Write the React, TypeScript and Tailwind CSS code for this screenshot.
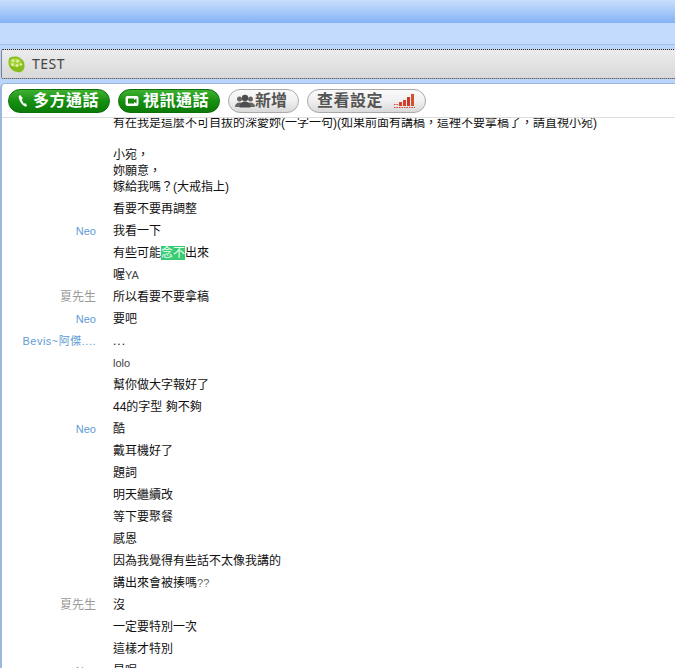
const messages: { name?: string; lines: string[] }[] = [
  {
    lines: [
      "有在我是這麼不可自拔的深愛妳(一字一句)(如果前面有講稿，這裡不要拿稿了，請直視小宛)",
      "\u00a0",
      "小宛，",
      "妳願意，",
      "嫁給我嗎？(大戒指上)",
    ],
  },
  { lines: ["看要不要再調整"] },
  { name: "Neo", lines: ["我看一下"] },
  { lines: ["HIGHLIGHT"] },
  { lines: ["喔YA"] },
  { name: "夏先生", lines: ["所以看要不要拿稿"] },
  { name: "Neo", lines: ["要吧"] },
  { name: "Bevis~阿傑....", lines: ["..."] },
  { lines: ["lolo"] },
  { lines: ["幫你做大字報好了"] },
  { lines: ["44的字型 夠不夠"] },
  { name: "Neo", lines: ["酷"] },
  { lines: ["戴耳機好了"] },
  { lines: ["題詞"] },
  { lines: ["明天繼續改"] },
  { lines: ["等下要聚餐"] },
  { lines: ["感恩"] },
  { lines: ["因為我覺得有些話不太像我講的"] },
  { lines: ["講出來會被揍嗎??"] },
  { name: "夏先生", lines: ["沒"] },
  { lines: ["一定要特別一次"] },
  { lines: ["這樣才特別"] },
  { name: "Neo", lines: ["是喔"] },
];

function LeafLogo() {
  return (
    <svg viewBox="0 0 17 17" className="h-[17px] w-[17px] shrink-0">
      <path
        d="M.6 4.500C.6 1.800 3 .4 5.500.8c2.500-.6 5 .1 7 1.400 2.600 1.700 4.200 4.100 4 7 .2 1.500-.2 3.100-1 4.600-.9 1.800-2.800 2.800-4.800 2.400-3.400-.2-6.100-1.200-8-3.600C.9 10.500.2 7.500.6 4.500z"
        fill="#86bd1c"
      />
      <ellipse cx="7.500" cy="6.500" rx="6" ry="4.500" fill="#a6d23c" />
      <circle cx="5" cy="4.500" r="1.500" fill="#dcefa0" />
      <circle cx="9.500" cy="5" r="1.500" fill="#dcefa0" />
      <circle cx="4.500" cy="8.500" r="1.500" fill="#dcefa0" />
      <circle cx="9" cy="9.500" r="1.500" fill="#dcefa0" />
      <circle cx="13" cy="8.500" r="1.300" fill="#dcefa0" />
    </svg>
  );
}

function PhoneIcon() {
  return (
    <svg viewBox="0 0 14 16" className="h-4 w-[14px] shrink-0">
      <path
        d="M4.200 2 2.800 3C2.400 6 5 11.600 9.400 13.800l1.800-1-1.900-2.700-1.300.6C7.100 9.600 6.100 7.600 5.900 6.200l1-1z"
        fill="#fff"
      />
    </svg>
  );
}

function VideoIcon() {
  return (
    <svg viewBox="0 0 14 12" className="h-3 w-[14px] shrink-0">
      <rect x="0.500" y="1" width="13" height="10" rx="2" fill="#fff" />
      <rect x="3" y="3.500" width="6" height="5" fill="#188a10" />
      <path d="M9 5 11.500 3.500v5L9 7z" fill="#188a10" />
    </svg>
  );
}

function PeopleIcon() {
  return (
    <svg viewBox="0 0 20 14" className="h-[14px] w-5 shrink-0">
      <circle cx="4.500" cy="5" r="2.500" fill="#666" />
      <circle cx="15.500" cy="5" r="2.500" fill="#666" />
      <path d="M0 13c0-3 2-4.500 4.500-4.500S9 10 9 13zM11 13c0-3 2-4.500 4.500-4.500S20 10 20 13z" fill="#666" />
      <circle cx="10" cy="4" r="3.200" fill="#4d4d4d" />
      <path d="M4.500 13.500c0-4 2.300-6 5.500-6s5.500 2 5.500 6z" fill="#4d4d4d" />
    </svg>
  );
}

function SignalIcon() {
  return (
    <svg viewBox="0 0 21 16" className="h-4 w-[21px] shrink-0">
      <rect x="5" y="9" width="3" height="4" fill="#d8412f" />
      <rect x="9" y="7" width="3" height="6" fill="#d8412f" />
      <rect x="13" y="4" width="3" height="9" fill="#c9382a" />
      <rect x="17" y="1" width="3" height="12" fill="#d8502a" />
      <path d="M0 14.500h21" stroke="#d8412f" strokeWidth="1" strokeDasharray="1.500 1" />
      <path d="M0 11.500h4" stroke="#d8412f" strokeWidth="1" strokeDasharray="1.500 1" />
    </svg>
  );
}

function GreenButton({ label, icon, className }: { label: string; icon: React.ReactNode; className: string }) {
  return (
    <div
      className={`flex h-6 items-center rounded-full border border-[#0e6e0a] bg-gradient-to-b from-[#3fb030] via-[#15900f] to-[#0c7a08] text-[16px] font-bold leading-none tracking-[0.5px] text-white ${className}`}
    >
      {icon}
      <span>{label}</span>
    </div>
  );
}

function GrayButton({ children, className }: { children: React.ReactNode; className: string }) {
  return (
    <div
      className={`flex h-6 items-center rounded-full border border-[#a9a9a9] bg-gradient-to-b from-[#fafafa] via-[#f0f0f0] to-[#d9d9d9] text-[16px] font-bold leading-none text-[#555] ${className}`}
    >
      {children}
    </div>
  );
}

function MessageText({ text }: { text: string }) {
  if (text === "HIGHLIGHT") {
    return (
      <div>
        有些可能<span className="bg-[#3ccb75] text-[#e6fff0]">念不</span>出來
      </div>
    );
  }
  if (text === "喔YA") {
    return (
      <div>
        喔<span className="text-[11px] text-[#444]">YA</span>
      </div>
    );
  }
  if (text === "lolo") return <div className="text-[11px] text-[#444]">lolo</div>;
  if (text === "...") return <div className="tracking-[1px]">...</div>;
  if (text === "講出來會被揍嗎??") {
    return (
      <div>
        講出來會被揍嗎<span className="text-[11px] text-[#666]">??</span>
      </div>
    );
  }
  return <div>{text}</div>;
}

export default function App() {
  return (
    <div className="flex h-[668px] w-[675px] flex-col overflow-hidden bg-[#b9d5fb] font-['Liberation_Sans','Noto_Sans_CJK_TC',sans-serif]">
      <div className="h-[23px] shrink-0 bg-gradient-to-b from-[#c9dffc] to-[#84b3f5]" />
      <div className="h-[21px] shrink-0 bg-[#c3dcfd]" />
      <div className="h-px shrink-0 bg-[#9fbfe9]" />
      <div className="ml-px mt-[4px] flex h-[30px] w-[680px] shrink-0 items-center gap-[7px] rounded-[2px] border border-dotted border-[#222] bg-gradient-to-b from-[#ececec] to-[#d8d8d8] pl-[6px] text-[14px] leading-none text-[#444]">
        <LeafLogo />
        <span className="font-['Noto_Sans','Liberation_Sans',sans-serif] tracking-[0.5px]">TEST</span>
      </div>
      <div className="mt-[4px] flex min-h-0 flex-1 flex-col overflow-hidden rounded-tl-[5px] border-l-2 border-t border-[#9db8dc] bg-white">
        <div className="flex h-[34px] shrink-0 items-center gap-[8px] border-b border-[#dddddd] pl-[6px]">
          <GreenButton label="多方通話" icon={<PhoneIcon />} className="w-[102px] gap-[3px] pl-[7px]" />
          <GreenButton label="視訊通話" icon={<VideoIcon />} className="w-[102px] gap-[4px] pl-[6px]" />
          <GrayButton className="w-[71px] gap-0 pl-[6px]">
            <PeopleIcon />
            <span>新增</span>
          </GrayButton>
          <GrayButton className="w-[119px] pl-[9px]">
            <span className="tracking-[0.5px]">查看設定</span>
            <span className="ml-[11px]">
              <SignalIcon />
            </span>
          </GrayButton>
        </div>
        <div className="min-h-0 flex-1 overflow-hidden">
          <div className="-mt-[6px] text-[12px] leading-[16px] text-[#111]">
            {messages.map((message, index) => (
              <div key={index} className="flex py-[3px]">
                <div
                  className={`w-[94px] shrink-0 whitespace-nowrap text-right text-[11px] ${
                    message.name === "夏先生"
                      ? "text-[12px] text-[#999999]"
                      : message.name?.startsWith("Bevis")
                        ? "tracking-[0.5px] text-[#5d9bd3]"
                        : "text-[#5d9bd3]"
                  }`}
                >
                  {message.name ?? ""}
                </div>
                <div className="ml-[17px]">
                  {message.lines.map((line, lineIndex) => (
                    <MessageText key={lineIndex} text={line} />
                  ))}
                </div>
              </div>
            ))}
          </div>
        </div>
      </div>
    </div>
  );
}
